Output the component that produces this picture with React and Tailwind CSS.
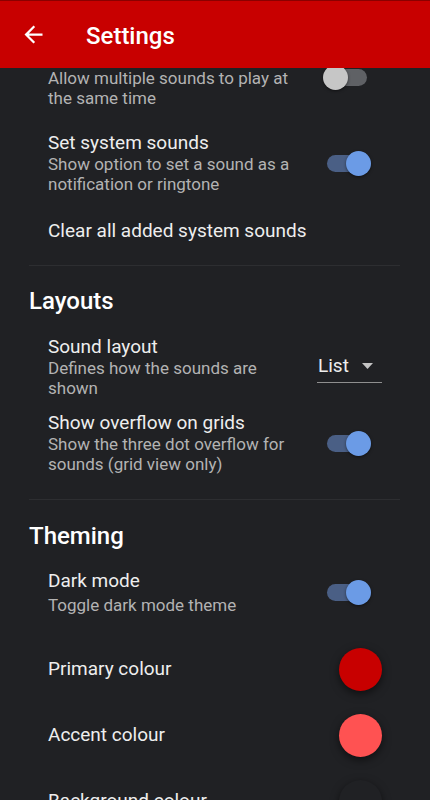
import React from "react";

function Toggle({ on }) {
  return (
    <div className="relative w-[48px] h-[25px] shrink-0 mr-[29px]">
      <div
        className={
          "absolute left-[4px] right-[4px] top-[4px] h-[17px] rounded-full " +
          (on ? "bg-[#4a5f85]" : "bg-[#5f6165]")
        }
      />
      <div
        className={
          "absolute top-0 w-[25px] h-[25px] rounded-full shadow-[0_1px_3px_rgba(0,0,0,0.5)] " +
          (on ? "right-0 bg-[#6b9be6]" : "left-0 bg-[#c6c6c6]")
        }
      />
    </div>
  );
}

function Row({ title, sub, right, className = "" }) {
  return (
    <div className={"flex items-center pl-[19px] " + className}>
      <div className="flex-1 min-w-0">
        <div className="text-[19px] leading-[22px] text-[#eeeeee]">{title}</div>
        {sub && (
          <div className="text-[17px] leading-[20px] text-[#b3b3b3] max-w-[245px]">{sub}</div>
        )}
      </div>
      {right}
    </div>
  );
}

function Heading({ children, className = "" }) {
  return (
    <div className={"text-[24px] leading-[28px] font-medium text-white " + className}>
      {children}
    </div>
  );
}

function Circle({ color }) {
  return (
    <div
      className={
        "w-[43px] h-[43px] rounded-full mr-[18px] shrink-0 shadow-[0_3px_8px_rgba(0,0,0,0.55)] " +
        color
      }
    />
  );
}

export default function App() {
  return (
    <div
      className="w-[430px] h-[800px] overflow-hidden flex flex-col bg-[#202124]"
      style={{ fontFamily: "Roboto, 'Noto Sans', sans-serif" }}
    >
      <header className="h-[68px] shrink-0 bg-[#c80000] border-t border-[#8a0000] flex items-center">
        <svg
          width="27"
          height="27"
          viewBox="0 0 24 24"
          className="ml-[20px]"
          fill="#ffffff"
        >
          <path d="M20 11H7.83l5.59-5.59L12 4l-8 8 8 8 1.41-1.41L7.83 13H20v-2z" />
        </svg>
        <div className="ml-[39px] text-[24px] font-medium text-white leading-[28px] mt-[2px]">
          Settings
        </div>
      </header>
      <div className="flex-1 overflow-hidden">
        <div className="-mt-[22px] pl-[29px] pr-[30px]">
          <Row
            title="Multiple play"
            sub={"Allow multiple sounds to play at the same time"}
            right={<Toggle on={false} />}
            className="pb-[12px]"
          />
          <Row
            title="Set system sounds"
            sub="Show option to set a sound as a notification or ringtone"
            right={<Toggle on={true} />}
            className="py-[12px]"
          />
          <Row title="Clear all added system sounds" className="py-[14px]" />
          <div className="mt-[9px] h-px bg-[#2d2e31]" />
          <Heading className="mt-[21px]">Layouts</Heading>
          <Row
            title="Sound layout"
            sub="Defines how the sounds are shown"
            className="mt-[21px]"
            right={
              <div className="w-[65px] mr-[18px] shrink-0 border-b border-[#8f8f8f] flex items-center justify-between pb-[5px] pt-[3px]">
                <span className="pl-[1px] text-[19px] leading-[22px] text-[#eeeeee]">List</span>
                <svg width="11" height="6" viewBox="0 0 11 6" className="mr-[9px]">
                  <path d="M0 0h11L5.5 6z" fill="#c4c4c4" />
                </svg>
              </div>
            }
          />
          <Row
            title="Show overflow on grids"
            sub="Show the three dot overflow for sounds (grid view only)"
            right={<Toggle on={true} />}
            className="mt-[14px]"
          />
          <div className="mt-[25px] h-px bg-[#2d2e31]" />
          <Heading className="mt-[22px]">Theming</Heading>
          <div className="mt-[20px] flex items-center pl-[19px]">
            <div className="flex-1">
              <div className="text-[19px] leading-[22px] text-[#eeeeee]">Dark mode</div>
              <div className="mt-[3px] text-[17px] leading-[20px] text-[#b3b3b3]">
                Toggle dark mode theme
              </div>
            </div>
            <Toggle on={true} />
          </div>
          <div className="mt-[21px] h-[66px] flex items-center pl-[19px]">
            <div className="flex-1 text-[19px] leading-[22px] text-[#eeeeee]">Primary colour</div>
            <Circle color="bg-[#c80000]" />
          </div>
          <div className="h-[66px] flex items-center pl-[19px]">
            <div className="flex-1 text-[19px] leading-[22px] text-[#eeeeee]">Accent colour</div>
            <Circle color="bg-[#ff5252]" />
          </div>
          <div className="h-[66px] flex items-center pl-[19px]">
            <div className="flex-1 text-[19px] leading-[22px] text-[#eeeeee]">Background colour</div>
            <Circle color="bg-[#202124]" />
          </div>
        </div>
      </div>
    </div>
  );
}
